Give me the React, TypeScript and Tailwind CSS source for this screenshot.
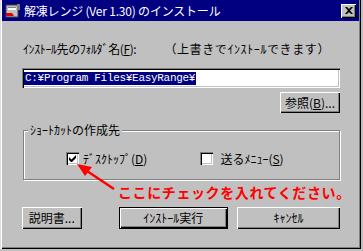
const jp = "font-['MS_UI_Gothic','Noto_Sans_CJK_JP',sans-serif]";

const Btn = ({ children, def, className }: { children: React.ReactNode; def?: boolean; className?: string }) => (
  <div
    className={`${className ?? ""} flex items-center justify-center bg-[#c0c0c0] text-[12px] leading-none text-black ${
      def
        ? "border border-black shadow-[inset_1px_1px_0_#fff,inset_-1px_-1px_0_#000,inset_-2px_-2px_0_#808080]"
        : "shadow-[inset_1px_1px_0_#fff,inset_-1px_-1px_0_#000,inset_-2px_-2px_0_#808080]"
    }`}
  >
    {children}
  </div>
);

const CheckBox = ({ checked }: { checked?: boolean }) => (
  <div className="w-[13px] h-[13px] bg-white shadow-[inset_1px_1px_0_#808080,inset_2px_2px_0_#000,inset_-1px_-1px_0_#fff,inset_-2px_-2px_0_#c0c0c0] flex items-center justify-center">
    {checked && (
      <svg width="7" height="7" viewBox="0 0 7 7">
        <path d="M0 2v3l2 2h1l4-4V0L2.5 4.5z" fill="#000" />
      </svg>
    )}
  </div>
);

export default function App() {
  return (
    <div className={`relative w-[363px] h-[251px] overflow-hidden bg-[#c0c0c0] ${jp}`}>
      <div className="w-[361px] h-[249px] shadow-[inset_1px_0_0_#dfdfdf,inset_2px_0_0_#fff,inset_-1px_-1px_0_#000,inset_-2px_-2px_0_#808080]">
        {/* title bar */}
        <div className="mx-[2px] h-[21px] bg-[#000080] flex items-center pl-[3px] pr-[3px]">
          <svg width="16" height="16" viewBox="0 0 16 16" className="shrink-0">
            <rect x="1" y="2" width="12" height="12" fill="#c0c0c0" stroke="#404040" />
            <rect x="3" y="4" width="8" height="3" fill="#fff" />
            <rect x="3" y="4" width="8" height="1" fill="#808080" />
            <path d="M1 10h6l2 3H1z" fill="#e00000" />
            <rect x="12" y="1" width="3" height="6" fill="#808080" />
          </svg>
          <span className="ml-[3px] text-white text-[12px] leading-none tracking-[-0.2px] whitespace-nowrap">
            解凍レンジ (Ver 1.30) のインストール
          </span>
          <div className="ml-auto w-[15px] h-[14px] bg-[#c0c0c0] shadow-[inset_1px_1px_0_#fff,inset_-1px_-1px_0_#000,inset_-2px_-2px_0_#808080] flex items-center justify-center">
            <svg width="8" height="7" viewBox="0 0 8 7">
              <path d="M0 0h2l2 2 2-2h2L5 3.5 8 7H6L4 5 2 7H0l3-3.5z" fill="#000" />
            </svg>
          </div>
        </div>

        <div className="pl-[22px] pr-[21px]">
          <div className="mt-[21px] h-[14px] flex items-center text-[12px] leading-none text-black whitespace-nowrap">
            <span className="ml-[1px] tracking-[-0.4px]">ｲﾝｽﾄｰﾙ先のﾌｫﾙﾀﾞ名(<u>F</u>):</span>
            <span className="ml-auto mr-[10px] tracking-[0.6px]">（上書きでｲﾝｽﾄｰﾙできます）</span>
          </div>

          <div className="mt-[12px] h-[20px] bg-white shadow-[inset_1px_1px_0_#808080,inset_2px_2px_0_#000,inset_-1px_-1px_0_#fff,inset_-2px_-2px_0_#c0c0c0] flex items-center pl-[2px]">
            <span className="bg-[#000080] text-white font-['Liberation_Mono','Noto_Sans_CJK_JP',monospace] text-[11px] leading-[13px] tracking-[-0.3px] px-[1px] whitespace-nowrap">
              C:¥Program Files¥EasyRange¥
            </span>
          </div>

          <div className="mt-[4px] flex justify-end">
            <Btn className="w-[60px] h-[21px]">
              参照(<u>B</u>)...
            </Btn>
          </div>

          {/* group box */}
          <div className="mt-[17px] ml-[1px] h-[50px] border border-[#808080] shadow-[1px_1px_0_#fff,inset_1px_1px_0_#fff] relative">
            <span className="absolute -top-[8px] left-[4px] bg-[#c0c0c0] px-[2px] text-[12px] leading-[14px] text-black whitespace-nowrap">
              ｼｮｰﾄｶｯﾄの作成先
            </span>
            <div className="flex items-center mt-[21px] text-[12px] leading-none text-black whitespace-nowrap">
              <div className="ml-[42px]">
                <CheckBox checked />
              </div>
              <span className="ml-[4px]">
                ﾃﾞｽｸﾄｯﾌﾟ(<u>D</u>)
              </span>
              <div className="ml-[53px]">
                <CheckBox />
              </div>
              <span className="ml-[7px]">
                送るﾒﾆｭｰ(<u>S</u>)
              </span>
            </div>
          </div>

          <div className="mt-[3px] ml-[96px] h-[18px] text-[#ff0000] font-bold text-[14px] leading-[18px] tracking-[0.6px] whitespace-nowrap">
            ここにチェックを入れてください。
          </div>

          <div className="mt-[6px] flex items-center">
            <Btn className="w-[60px] h-[22px]">説明書...</Btn>
            <Btn def className="ml-[37px] w-[110px] h-[22px]">
              ｲﾝｽﾄｰﾙ実行
            </Btn>
            <Btn className="ml-[9px] w-[104px] h-[22px]">ｷｬﾝｾﾙ</Btn>
          </div>
        </div>
      </div>

      {/* red arrow */}
      <svg className="absolute left-0 top-0 pointer-events-none" width="363" height="251">
        <line x1="114" y1="189" x2="84" y2="169" stroke="#ff0000" strokeWidth="2.5" />
        <path d="M77 164L92 167L85 176Z" fill="#ff0000" />
      </svg>
    </div>
  );
}
